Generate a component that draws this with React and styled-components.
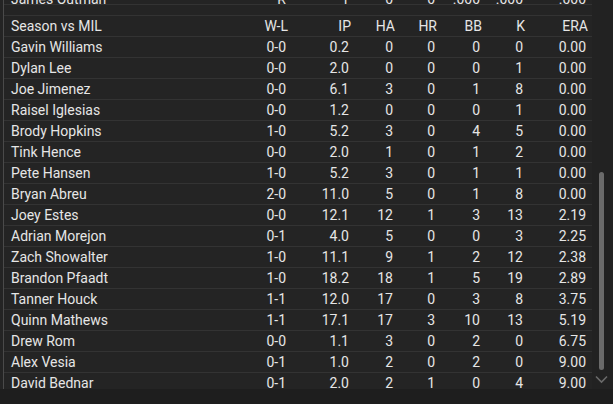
import React from "react";
import styled, { createGlobalStyle } from "styled-components";

const GlobalStyle = createGlobalStyle`
  html, body {
    margin: 0;
    padding: 0;
    background: #1e1e1e;
  }
  body {
    font-family: Roboto, "Liberation Sans", sans-serif;
  }
`;

const Screen = styled.div`
  width: 613px;
  height: 404px;
  display: flex;
  overflow: hidden;
  background: #1e1e1e;
`;

const LeftEdge = styled.div`
  width: 3px;
  height: 389px;
  background: #242424;
`;

const Panel = styled.div`
  width: 588px;
  height: 389px;
  overflow: hidden;
  border-left: 1px solid #4a4a4a;
  background: #242424;
`;

const Gutter = styled.div`
  flex: 1;
  height: 389px;
  display: flex;
  flex-direction: column;
  align-items: center;
  background: #222222;
  padding-right: 2px;
`;

const Thumb = styled.div`
  margin-top: 172px;
  width: 5px;
  height: 198px;
  border-radius: 3px;
  background: #6b6b6b;
`;

const Chevron = styled.svg`
  margin-top: 5px;
  width: 13px;
  height: 9px;
`;

const Rows = styled.div`
  margin-top: -12px;
`;

const Row = styled.div`
  display: grid;
  grid-template-columns: 239px 38px 63px 44px 42px 45px 43px 63px;
  height: ${(p) => (p.$short ? "15px" : "20px")};
  line-height: 20px;
  padding-left: 7px;
  border-top: 1px solid #333333;
  color: #e6e6e6;
  font-size: 14px;
  white-space: nowrap;
`;

const Spacer = styled.div`
  height: 10px;
  border-top: 1px solid #333333;
`;

const Cell = styled.div`
  text-align: ${(p) => (p.$left ? "left" : "right")};
  padding-right: ${(p) => (p.$head ? "0" : "2px")};
`;

const topRow = ["James Outman", "R", "1", "0", "0", ".000", ".000", ".000"];

const headers = ["Season vs MIL", "W-L", "IP", "HA", "HR", "BB", "K", "ERA"];

const pitchers = [
  ["Gavin Williams", "0-0", "0.2", "0", "0", "0", "0", "0.00"],
  ["Dylan Lee", "0-0", "2.0", "0", "0", "0", "1", "0.00"],
  ["Joe Jimenez", "0-0", "6.1", "3", "0", "1", "8", "0.00"],
  ["Raisel Iglesias", "0-0", "1.2", "0", "0", "0", "1", "0.00"],
  ["Brody Hopkins", "1-0", "5.2", "3", "0", "4", "5", "0.00"],
  ["Tink Hence", "0-0", "2.0", "1", "0", "1", "2", "0.00"],
  ["Pete Hansen", "1-0", "5.2", "3", "0", "1", "1", "0.00"],
  ["Bryan Abreu", "2-0", "11.0", "5", "0", "1", "8", "0.00"],
  ["Joey Estes", "0-0", "12.1", "12", "1", "3", "13", "2.19"],
  ["Adrian Morejon", "0-1", "4.0", "5", "0", "0", "3", "2.25"],
  ["Zach Showalter", "1-0", "11.1", "9", "1", "2", "12", "2.38"],
  ["Brandon Pfaadt", "1-0", "18.2", "18", "1", "5", "19", "2.89"],
  ["Tanner Houck", "1-1", "12.0", "17", "0", "3", "8", "3.75"],
  ["Quinn Mathews", "1-1", "17.1", "17", "3", "10", "13", "5.19"],
  ["Drew Rom", "0-0", "1.1", "3", "0", "2", "0", "6.75"],
  ["Alex Vesia", "0-1", "1.0", "2", "0", "2", "0", "9.00"],
  ["David Bednar", "0-1", "2.0", "2", "1", "0", "4", "9.00"],
];

const StatRow = ({ values, head, short }) => (
  <Row $short={short}>
    {values.map((v, i) => (
      <Cell key={i} $left={i === 0} $head={head && i > 0}>
        {v}
      </Cell>
    ))}
  </Row>
);

const App = () => {
  return (
    <>
      <GlobalStyle />
      <Screen>
        <LeftEdge />
        <Panel>
          <Rows>
            <StatRow values={topRow} short />
            <Spacer />
            <StatRow values={headers} head />
            {pitchers.map((p) => (
              <StatRow key={p[0]} values={p} />
            ))}
          </Rows>
        </Panel>
        <Gutter>
          <Thumb />
          <Chevron viewBox="0 0 13 9">
            <path d="M1 1.5 L6.5 7 L12 1.5" fill="none" stroke="#6a6a6a" strokeWidth="1.6" />
          </Chevron>
        </Gutter>
      </Screen>
    </>
  );
};

export default App;
